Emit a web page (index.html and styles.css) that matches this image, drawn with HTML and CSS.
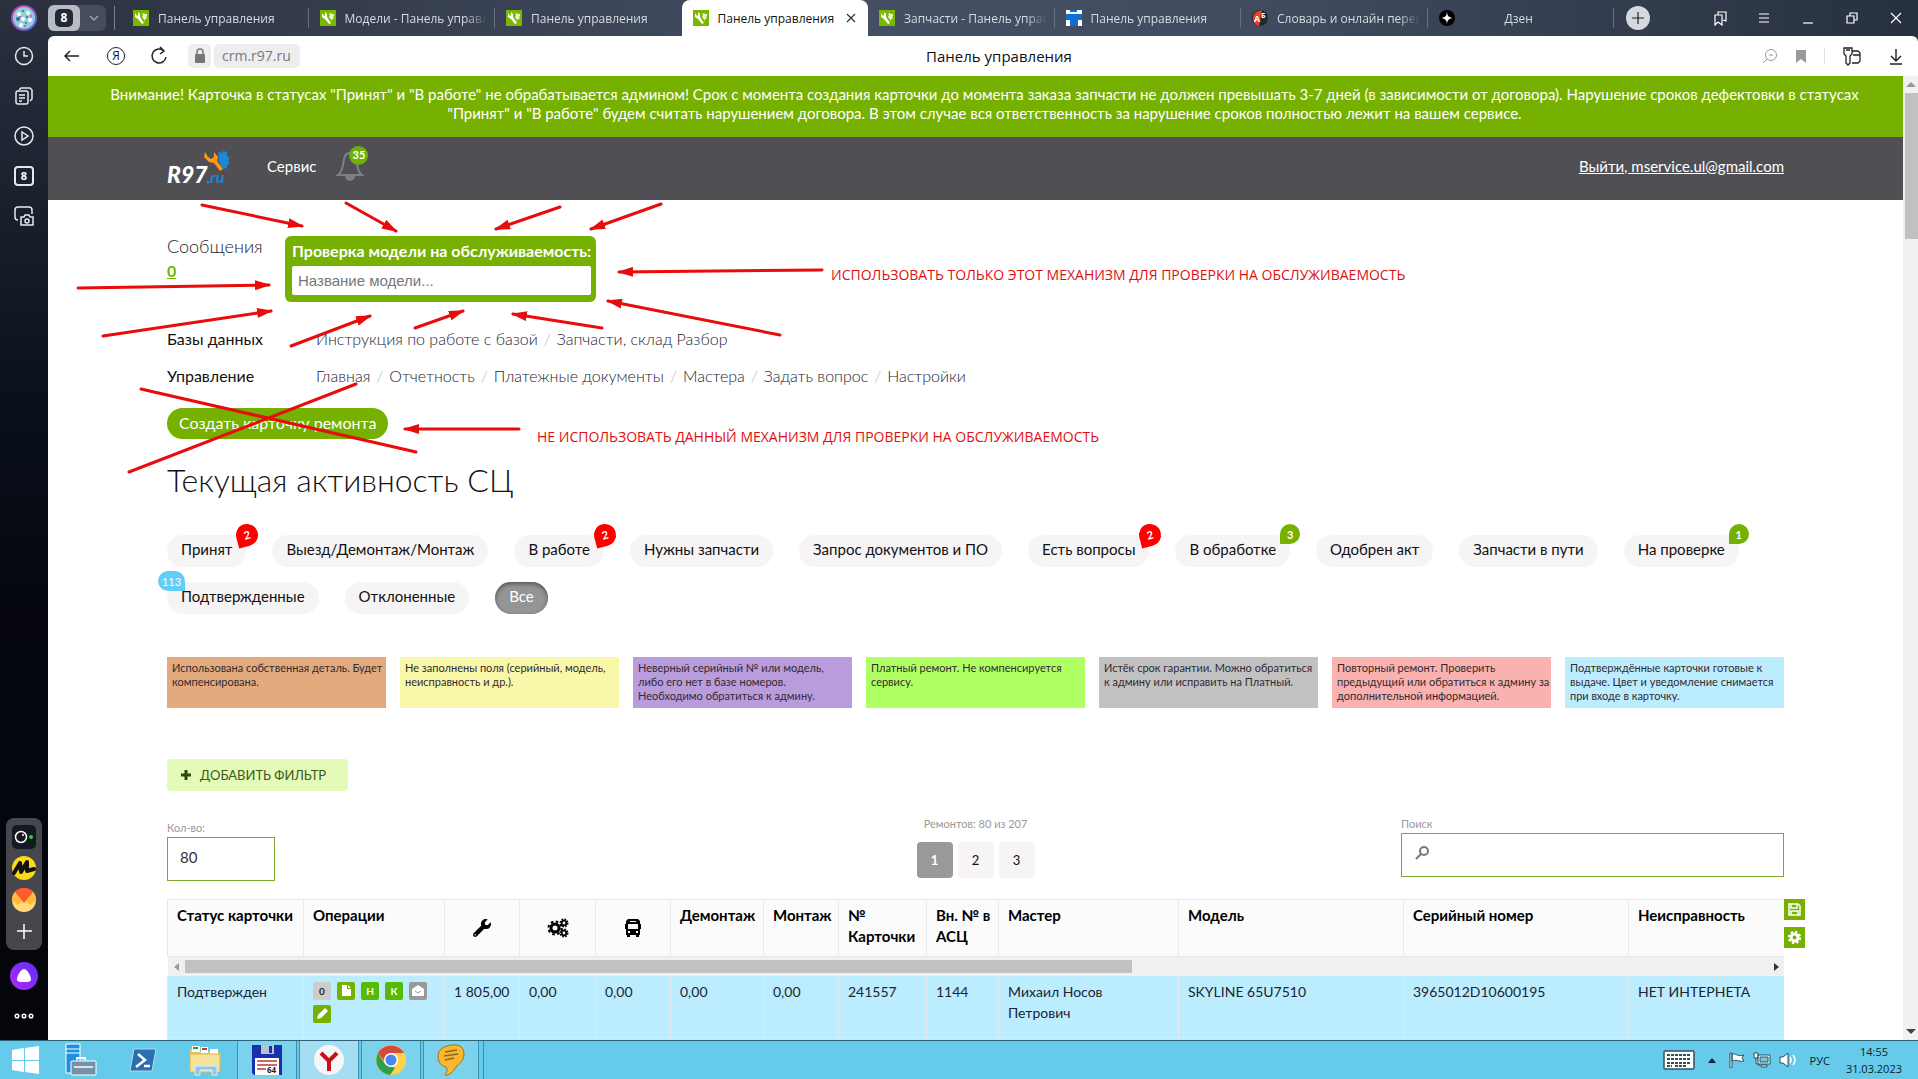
FILE: index.html
```
<!DOCTYPE html>
<html lang="ru">
<head>
<meta charset="utf-8">
<title>Панель управления</title>
<link rel="stylesheet" href="styles.css">
</head>
<body>
<svg class="defs" aria-hidden="true">
  <defs>
    <symbol id="wrench" viewBox="0 0 512 512"><path fill="currentColor" d="M507.73 109.1c-2.24-9.03-13.54-12.09-20.12-5.51l-74.36 74.36-67.88-11.31-11.31-67.88 74.36-74.36c6.62-6.62 3.43-17.9-5.66-20.16-47.38-11.74-99.55.91-136.58 37.93-39.64 39.64-50.55 97.1-34.05 147.2L18.74 402.76c-24.99 24.99-24.99 65.51 0 90.5 24.99 24.99 65.51 24.99 90.5 0l213.21-213.21c50.12 16.71 107.47 5.68 147.37-34.22 37.07-37.07 49.7-89.32 37.91-136.73zM64 472c-13.25 0-24-10.75-24-24 0-13.26 10.75-24 24-24s24 10.74 24 24c0 13.25-10.75 24-24 24z"/></symbol>
    <symbol id="fav" viewBox="0 0 16 16"><path fill="#7ab800" d="M0 0h16v16H0z"/><path fill="#fff" d="M2 3v4l3 2 4 5 2-1-4-6V4L5 2v3L4 6z"/><path fill="#e8f5c8" d="M9 3l1 1 1-1 1 1h2v2l-1 1 1 1-1 1h-1v2l-3-4 1-2-1-1z"/></symbol>
    <marker id="head" viewBox="0 0 16 10" refX="14" refY="5" markerWidth="16" markerHeight="10" markerUnits="userSpaceOnUse" orient="auto"><path d="M0 0l16 5-16 5z" fill="#e80c0c"/></marker>
  </defs>
</svg>
<div class="desktop">
  <div class="browser">
    <aside class="rail">
      <span class="avatar"><svg width="26" height="26" viewBox="0 0 26 26"><defs><linearGradient id="ring" x1="0" y1="0" x2="1" y2="1"><stop offset="0" stop-color="#e0409a"/><stop offset="1" stop-color="#5a5cf0"/></linearGradient></defs><circle cx="13" cy="13" r="12" fill="#8fd0d8" stroke="url(#ring)" stroke-width="2"/><g fill="#fff"><circle cx="8" cy="9" r="2"/><circle cx="17" cy="8" r="2"/><circle cx="12" cy="14" r="2"/><circle cx="19" cy="15" r="2"/><circle cx="10" cy="20" r="2"/></g><g fill="#3b62a8"><circle cx="12" cy="6" r="1"/><circle cx="7" cy="14" r="2"/><circle cx="16" cy="12" r="1"/><circle cx="15" cy="18" r="1"/></g><g fill="#d04a90"><circle cx="20" cy="11" r="1"/><circle cx="14" cy="21" r="1"/><circle cx="9" cy="12" r="1"/></g></svg></span>
      <nav class="rail-nav">
        <button aria-label="История"><svg width="20" height="20" viewBox="0 0 20 20"><circle cx="10" cy="10" r="8.5"/><path d="M10 5v5h4"/></svg></button>
        <button aria-label="Коллекции"><svg width="20" height="20" viewBox="0 0 20 20"><rect x="2" y="5" width="12" height="13" rx="2"/><path d="M5 4l2-2h9l2 2v9l-2 2M5 9h6M5 12h6M5 15h3"/></svg></button>
        <button aria-label="Видео"><svg width="20" height="20" viewBox="0 0 20 20"><circle cx="10" cy="10" r="9"/><path d="M8 6l6 4-6 4z"/></svg></button>
        <button aria-label="Вкладки" class="rail-count">8</button>
        <button aria-label="Снимок"><svg width="20" height="20" viewBox="0 0 20 20"><path d="M4 14c-2 0-3-1-3-3V4c0-2 1-3 3-3h11c2 0 3 1 3 3v4"/><path d="M7 11h3l1-2h4l1 2h3v8H7z"/><circle cx="13" cy="15" r="2"/></svg></button>
      </nav>
      <div class="rail-apps">
        <svg width="24" height="24" viewBox="0 0 24 24"><rect width="24" height="24" rx="5" fill="#131a22"/><circle cx="9" cy="12" r="5.5" fill="none" stroke="#fff" stroke-width="1.5"/><circle cx="11" cy="10" r="1" fill="#fff"/><circle cx="19" cy="12" r="2" fill="#19e02c"/></svg>
        <svg width="24" height="24" viewBox="0 0 24 24"><circle cx="12" cy="12" r="12" fill="#fdd91c"/><path d="M2 17L8 7l1 9 6-10v9l7-2" fill="none" stroke="#111" stroke-width="4" stroke-linejoin="round" stroke-linecap="round"/></svg>
        <svg width="24" height="24" viewBox="0 0 24 24"><circle cx="12" cy="12" r="12" fill="#ffd97a"/><path d="M0 12a12 12 0 0 1 3-8l9 10 9-10a12 12 0 0 1 3 8l-5 5-7-5-7 5z" fill="#ffbb33"/><path d="M3 4a12 12 0 0 1 18 0l-9 11z" fill="#ff5c2b"/></svg>
        <svg width="24" height="24" viewBox="0 0 24 24" stroke="#fff" stroke-width="1.5"><path d="M12 5v15M5 12h15"/></svg>
      </div>
      <svg class="alice" width="28" height="28" viewBox="0 0 28 28"><defs><linearGradient id="al" x1="0" y1="1" x2="1" y2="0"><stop offset="0" stop-color="#b428ee"/><stop offset="1" stop-color="#5a30ff"/></linearGradient></defs><circle cx="14" cy="14" r="14" fill="url(#al)"/><path d="M14 7c3 0 7 7 7 10s-3 3-7 3-7 0-7-3 4-10 7-10z" fill="#fff"/></svg>
      <svg class="more" width="20" height="6" viewBox="0 0 20 6" fill="none" stroke="#fff" stroke-width="1.5"><circle cx="3" cy="3" r="1.8"/><circle cx="10" cy="3" r="1.8"/><circle cx="17" cy="3" r="1.8"/></svg>
    </aside>
    <div class="window">
      <div class="tabstrip">
        <div class="group"><span class="group-count"><b>8</b></span><svg width="26" height="26" viewBox="0 0 26 26" fill="none" stroke="#9aa2b0" stroke-width="1.5"><path d="M10 11l4 4 4-4"/></svg></div>
        <div class="tabs">
          <div class="tab"><svg width="16" height="16"><use href="#fav"/></svg><span>Панель управления</span></div>
          <div class="tab"><svg width="16" height="16"><use href="#fav"/></svg><span>Модели - Панель управления</span></div>
          <div class="tab no-line"><svg width="16" height="16"><use href="#fav"/></svg><span>Панель управления</span></div>
          <div class="tab active"><svg width="16" height="16"><use href="#fav"/></svg><span>Панель управления</span><svg class="close" width="10" height="10" viewBox="0 0 10 10" stroke="#333" stroke-width="1.2"><path d="M1 1l8 8M9 1l-8 8"/></svg></div>
          <div class="tab"><svg width="16" height="16"><use href="#fav"/></svg><span>Запчасти - Панель управления</span></div>
          <div class="tab"><svg width="16" height="16" viewBox="0 0 16 16"><path fill="#fff" d="M0 0h16v16H0z"/><path fill="#0f6fd6" d="M0 4h16v6h-4v6H4v-6H0zM4 0h7v2H4z"/></svg><span>Панель управления</span></div>
          <div class="tab"><svg width="16" height="16" viewBox="0 0 16 16"><circle cx="8" cy="8" r="8" fill="#26262c"/><path fill="#e8402a" d="M10 0L7 16a8 8 0 0 1-3-14z"/><text x="2" y="12" font-size="9" font-weight="700" fill="#fff">A</text><text x="9" y="8" font-size="7" font-weight="700" fill="#fff">Б</text></svg><span>Словарь и онлайн переводчик</span></div>
          <div class="tab zen"><svg width="16" height="16" viewBox="0 0 16 16"><circle cx="8" cy="8" r="8" fill="#000"/><path fill="#fff" d="M8 1c0 5 2 7 7 7-5 0-7 2-7 7 0-5-2-7-7-7 5 0 7-2 7-7z"/></svg><span>Дзен</span></div>
        </div>
        <button class="plus" aria-label="Новая вкладка"><svg width="24" height="24" viewBox="0 0 24 24"><circle cx="12" cy="12" r="12" fill="#d5d8de"/><path d="M12 6v12M6 12h12" stroke="#222" stroke-width="1.2"/></svg></button>
        <div class="wincontrols">
          <svg width="16" height="16" viewBox="0 0 16 16"><path d="M3 5h7v10l-4-3-3 3zM6 5V2h8v9l-3-1"/></svg>
          <svg width="16" height="16" viewBox="0 0 16 16"><path d="M3 4h10M3 8h10M3 12h10"/></svg>
          <svg width="16" height="16" viewBox="0 0 16 16"><path d="M3 13h10"/></svg>
          <svg width="16" height="16" viewBox="0 0 16 16"><path d="M3 6h7v7H3zM6 6V3h7v7h-3"/></svg>
          <svg width="16" height="16" viewBox="0 0 16 16"><path d="M3 3l10 10M13 3L3 13"/></svg>
        </div>
      </div>
      <div class="toolbar">
        <div class="tools-left">
          <button aria-label="Назад"><svg width="20" height="20" viewBox="0 0 20 20"><path d="M17 10H3M8 5l-5 5 5 5"/></svg></button>
          <button aria-label="Яндекс" class="ya">Я</button>
          <button aria-label="Обновить"><svg width="20" height="20" viewBox="0 0 20 20"><path d="M15 5a7 7 0 1 0 2 6M11 1l4 4-4 3"/></svg></button>
          <div class="address"><span class="lock"><svg width="12" height="16" viewBox="0 0 12 16"><rect x="1" y="6" width="10" height="9" rx="1" fill="#777"/><path d="M3 7V4a3 3 0 0 1 6 0v3" fill="none" stroke="#777" stroke-width="1.5"/></svg></span><span class="url">crm.r97.ru</span></div>
        </div>
        <span class="page-title">Панель управления</span>
        <div class="tools-right">
          <svg width="16" height="16" viewBox="0 0 16 16" stroke="#999"><circle cx="9" cy="7" r="5.5"/><path d="M7 7h4M5 11l-4 4"/></svg>
          <svg width="12" height="16" viewBox="0 0 12 16"><path d="M1 2h10v13l-5-4-5 4z" fill="#999"/></svg>
          <i></i>
          <svg width="20" height="20" viewBox="0 0 20 20" stroke="#222" stroke-width="1.3"><path d="M2 2h8v6L8 10v7l-2 2-2-2v-7L2 8zM4 4h4M10 5h6l2 2v8l-2 2h-6M11 9h7"/></svg>
          <svg width="16" height="18" viewBox="0 0 16 18" stroke="#222" stroke-width="1.4"><path d="M8 2v11M3 9l5 5 5-5M2 17h12"/></svg>
        </div>
      </div>
      <div class="view">
        <div class="page">
          <p class="banner">Внимание! Карточка в статусах "Принят" и "В работе" не обрабатывается админом! Срок с момента создания карточки до момента заказа запчасти не должен превышать 3-7 дней (в зависимости от договора). Нарушение сроков дефектовки в статусах "Принят" и "В работе" будем считать нарушением договора. В этом случае вся ответственность за нарушение сроков полностью лежит на вашем сервисе.</p>
          <header class="site-head">
            <a href="#" class="logo" aria-label="R97.ru"><svg width="64" height="36" viewBox="0 0 64 36"><g transform="translate(37 1)"><path fill="#ff9a0a" d="M1 3l-1 5 5 5 5 1 6 8 3-2-6-8 1-4-4-5v5l-3 2-3-2z"/><path fill="#1c86d8" d="M14 3l4 1 1-2 4 1v4l3 2-2 3 2 3-3 1v3l-4 1-5-9 1-2z"/></g><text x="0" y="35" font-size="23" font-weight="900" font-style="italic" fill="#fff">R97</text><text x="43" y="35" font-size="16" font-weight="700" font-style="italic" fill="#1c86d8">ru</text><circle cx="41" cy="34" r="1.5" fill="#1c86d8"/></svg></a>
            <a href="#" class="service">Сервис</a>
            <a href="#" class="bell" aria-label="Уведомления"><svg width="28" height="32" viewBox="0 0 28 32" fill="none" stroke="#7c8184" stroke-width="2"><path d="M14 3c-6 0-6 6-7 12-1 5-2 8-5 10h24c-3-2-4-5-5-10-1-6-1-12-7-12z"/><path d="M10 26a4 4 0 0 0 8 0z" fill="#7c8184"/></svg><b>35</b></a>
            <a href="#" class="logout">Выйти, mservice.ul@gmail.com</a>
          </header>
          <main>
            <section class="top">
              <div class="messages"><span>Сообщения</span><a href="#">0</a></div>
              <form class="check"><label for="model">Проверка модели на обслуживаемость:</label><input id="model" type="text" placeholder="Название модели..."></form>
            </section>
            <nav class="links"><span>Базы данных</span><div><a href="#">Инструкция по работе с базой</a><a href="#">Запчасти, склад Разбор</a></div></nav>
            <nav class="links"><span>Управление</span><div><a href="#">Главная</a><a href="#">Отчетность</a><a href="#">Платежные документы</a><a href="#">Мастера</a><a href="#">Задать вопрос</a><a href="#">Настройки</a></div></nav>
            <button class="create">Создать карточку ремонта</button>
            <h1>Текущая активность СЦ</h1>
            <nav class="pills">
              <a href="#">Принят<b class="red">2</b></a>
              <a href="#">Выезд/Демонтаж/Монтаж</a>
              <a href="#">В работе<b class="red">2</b></a>
              <a href="#">Нужны запчасти</a>
              <a href="#">Запрос документов и ПО</a>
              <a href="#">Есть вопросы<b class="red">2</b></a>
              <a href="#">В обработке<b>3</b></a>
              <a href="#">Одобрен акт</a>
              <a href="#">Запчасти в пути</a>
              <a href="#">На проверке<b>1</b></a>
              <a href="#">Подтвержденные<b class="blue">113</b></a>
              <a href="#">Отклоненные</a>
              <a href="#" class="on">Все</a>
            </nav>
            <ul class="legend">
              <li class="c1">Использована собственная деталь. Будет компенсирована.</li>
              <li class="c2">Не заполнены поля (серийный, модель, неисправность и др.).</li>
              <li class="c3">Неверный серийный № или модель, либо его нет в базе номеров. Необходимо обратиться к админу.</li>
              <li class="c4">Платный ремонт. Не компенсируется сервису.</li>
              <li class="c5">Истёк срок гарантии. Можно обратиться к админу или исправить на Платный.</li>
              <li class="c6">Повторный ремонт. Проверить предыдущий или обратиться к админу за дополнительной информацией.</li>
              <li class="c7">Подтверждённые карточки готовые к выдаче. Цвет и уведомление снимается при входе в карточку.</li>
            </ul>
            <button class="add-filter"><svg width="10" height="10" viewBox="0 0 10 10"><path d="M5 0v10M0 5h10" stroke="#2c4a00" stroke-width="3"/></svg>ДОБАВИТЬ ФИЛЬТР</button>
            <section class="controls">
              <div class="count"><label for="count">Кол-во:</label><input id="count" type="text" value="80"></div>
              <div class="pager"><span>Ремонтов: 80 из 207</span><div><button class="on">1</button><button>2</button><button>3</button></div></div>
              <div class="search"><label for="search">Поиск</label><div class="search-box"><svg width="16" height="16" viewBox="0 0 16 16" fill="none" stroke="#777" stroke-width="2"><circle cx="10" cy="6" r="4"/><path d="M7 9l-5 5"/></svg><input id="search" type="text"></div></div>
            </section>
            <div class="table-wrap">
              <table>
                <colgroup><col class="w136"><col class="w141"><col class="w75"><col class="w76"><col class="w75"><col class="w93"><col class="w75"><col class="w88"><col class="w72"><col class="w180"><col class="w225"><col class="w225"><col></colgroup>
                <thead>
                  <tr>
                    <th>Статус карточки</th><th>Операции</th>
                    <th class="ic"><svg width="18" height="18"><use href="#wrench"/></svg></th>
                    <th class="ic"><svg width="22" height="20" viewBox="0 0 22 20" fill="none" stroke="#000"><circle cx="8" cy="10" r="4" stroke-width="3"/><circle cx="8" cy="10" r="6.5" stroke-width="2" stroke-dasharray="2.6 2.5"/><circle cx="17" cy="5" r="2.3" stroke-width="1.8"/><circle cx="17" cy="5" r="3.8" stroke-width="1.4" stroke-dasharray="1.7 1.28"/><circle cx="17" cy="15" r="2.3" stroke-width="1.8"/><circle cx="17" cy="15" r="3.8" stroke-width="1.4" stroke-dasharray="1.7 1.28"/></svg></th>
                    <th class="ic"><svg width="18" height="20" viewBox="0 0 18 20"><path fill="#000" fill-rule="evenodd" d="M4 1h10l2 2v3h1v5h-1v6h-1v2h-3v-2H6v2H3v-2H2v-6H1V6h1V3zM6 3v1h6V3zM4 6v5h10V6zM4 13v2h2v-2zM12 13v2h2v-2z"/></svg></th>
                    <th>Демонтаж</th><th>Монтаж</th><th>№ Карточки</th><th>Вн. № в АСЦ</th><th>Мастер</th><th>Модель</th><th>Серийный номер</th><th>Неисправность</th>
                  </tr>
                  <tr class="scroll-row"><td colspan="13"><div class="hscroll"><i class="left"></i><span></span><i class="right"></i></div></td></tr>
                </thead>
                <tbody>
                  <tr>
                    <td>Подтвержден</td>
                    <td><div class="ops"><button class="zero">0</button><button class="doc" aria-label="Документ"><svg width="18" height="18" viewBox="0 0 18 18"><path d="M5 3h5v4h4v7H5z" fill="#fff"/><path d="M11 3l3 3h-3z" fill="#fff"/></svg></button><button>Н</button><button>К</button><button class="mail" aria-label="Письмо"><svg width="18" height="18" viewBox="0 0 18 18"><path d="M3 7l6-4 6 4v7H3z" fill="#fff"/><path d="M6 9l3 2 3-2" fill="none" stroke="#999"/></svg></button><button class="doc" aria-label="Изменить"><svg width="18" height="18" viewBox="0 0 18 18"><path d="M4 14l1-4 7-7 3 3-7 7z" fill="#fff"/></svg></button></div></td>
                    <td class="num">1 805,00</td><td>0,00</td><td>0,00</td><td>0,00</td><td>0,00</td><td>241557</td><td>1144</td><td>Михаил Носов<br>Петрович</td><td>SKYLINE 65U7510</td><td>3965012D10600195</td><td>НЕТ ИНТЕРНЕТА</td>
                  </tr>
                  <tr><td></td><td></td><td></td><td></td><td></td><td></td><td></td><td></td><td></td><td></td><td></td><td></td><td></td></tr>
                </tbody>
              </table>
              <div class="side">
                <button aria-label="Сохранить"><svg width="15" height="15" viewBox="0 0 15 15" fill="none" stroke="#fff" stroke-width="1.5"><path d="M2 2h9l2 2v9H2zM4 2v4h6V2M4 13V9h7v4"/></svg></button>
                <button aria-label="Настройки"><svg width="15" height="15" viewBox="0 0 15 15" fill="none" stroke="#fff"><circle cx="7.5" cy="7.5" r="3.5" stroke-width="3"/><circle cx="7.5" cy="7.5" r="5.5" stroke-width="2.4" stroke-dasharray="2.3 2"/></svg></button>
              </div>
            </div>
          </main>
          <div class="notes">
            <svg width="1200" height="420" viewBox="48 76 1200 420" fill="none" stroke="#e80c0c" stroke-width="3" stroke-linecap="round">
              <g class="arrows">
                <path d="M202 205L302 226"/><path d="M346 203L396 231"/><path d="M560 207L496 229"/><path d="M661 204L591 229"/><path d="M78 288L269 285"/><path d="M103 336L271 311"/><path d="M291 346L370 316"/><path d="M415 328L463 311"/><path d="M602 328L513 314"/><path d="M822 270L619 272"/><path d="M780 335L608 301"/><path d="M519 429L405 429"/>
              </g>
              <path d="M141 389L416 452M356 384L129 472"/>
            </svg>
            <span class="note-use">ИСПОЛЬЗОВАТЬ ТОЛЬКО ЭТОТ МЕХАНИЗМ ДЛЯ ПРОВЕРКИ НА ОБСЛУЖИВАЕМОСТЬ</span>
            <span class="note-avoid">НЕ ИСПОЛЬЗОВАТЬ ДАННЫЙ МЕХАНИЗМ ДЛЯ ПРОВЕРКИ НА ОБСЛУЖИВАЕМОСТЬ</span>
          </div>
        </div>
        <div class="vscroll"><i class="up"></i><span></span><i class="down"></i></div>
      </div>
    </div>
  </div>
  <footer class="taskbar">
    <button class="app" aria-label="Пуск"><svg width="30" height="28" viewBox="0 0 30 28" fill="#fff"><path d="M1 4l12-2v12H1zM14 2l14-2v14H14zM1 15h12v11L1 24zM14 15h14v13l-14-2z"/></svg></button>
    <button class="app" aria-label="Диспетчер серверов"><svg width="32" height="34" viewBox="0 0 32 34" stroke="#fff"><path d="M1 1h14v29H1z" fill="#1f8fe0"/><path d="M1 6h14M1 10h14"/><path d="M12 17v-2h8v2" fill="none" stroke-width="2"/><rect x="6" y="18" width="25" height="14" rx="1" fill="#7592a8"/><path d="M9 24h19" stroke-width="1.5"/></svg></button>
    <button class="app" aria-label="PowerShell"><svg width="28" height="24" viewBox="0 0 28 24"><path d="M5 1h22l-4 22H1z" fill="#2a6fb0" stroke="#b8d8ee"/><path d="M9 6l7 6-9 7M15 18h6" fill="none" stroke="#fff" stroke-width="2.5"/></svg></button>
    <button class="app" aria-label="Проводник"><svg width="34" height="32" viewBox="0 0 34 32"><path d="M2 5h9l2 3h18v20H2z" fill="#e8c860"/><path d="M4 2h8v6H4zM13 3h7v6h-7zM22 5h8v6h-8z" fill="#fff"/><path d="M5 3h5v2H5z" fill="#2a9a3a"/><path d="M14 4h5v2h-5z" fill="#c83a2a"/><path d="M2 10h30v18H2z" fill="#f6e39a" stroke="#d9b850"/><path d="M7 31v-9h22v9h-5v-5H12v5z" fill="#8cc8ee" stroke="#d8f0fc"/></svg></button>
    <button class="app run" aria-label="Total Commander"><svg width="32" height="32" viewBox="0 0 32 32"><path d="M1 1h30v30H3l-2-2z" fill="#1a2fae"/><path d="M10 1h13v9H10z" fill="#b9c3cc"/><path d="M18 2h3v7h-3z" fill="#1a2fae"/><path d="M4 14h24v17H4z" fill="#fff"/><path d="M6 17h20M6 21h20M6 25h9" stroke="#b83a3a" stroke-width="1.3"/><text x="16" y="29" font-size="8" font-weight="700" fill="#222">64</text></svg></button>
    <button class="app run current" aria-label="Яндекс Браузер"><svg width="30" height="30" viewBox="0 0 30 30"><circle cx="15" cy="15" r="15" fill="#f5f6f8"/><path d="M7 8l8 8 8-8M15 16v10" fill="none" stroke="#c8101a" stroke-width="4"/></svg></button>
    <button class="app run" aria-label="Chrome"><svg width="30" height="30" viewBox="0 0 30 30"><circle cx="15" cy="15" r="15" fill="#ffd24a"/><path d="M2 8a15 15 0 0 1 26 0H15l-6 9z" fill="#d64a3c"/><path d="M2 8l7 11 10 4-5 7A15 15 0 0 1 2 8z" fill="#2f9e4f"/><circle cx="15" cy="15" r="7" fill="#fff"/><circle cx="15" cy="15" r="5.5" fill="#4a86f0"/></svg></button>
    <button class="app run chat" aria-label="Чат"><svg width="28" height="32" viewBox="0 0 28 32"><path d="M15 1c8-1 12 3 12 9 0 7-5 9-8 13-2 3-4 6-8 8-2 0-3 0-3-1 2-2 3-5 1-7C4 22 1 18 1 12 1 6 6 2 15 1z" fill="#f8b830" stroke="#a86a10"/><path d="M8 8l12-2M7 12l14-2M8 16l9-2" stroke="#8a6a20" stroke-width="1.5"/></svg></button>
    <i class="divider"></i>
    <div class="tray">
      <svg width="32" height="20" viewBox="0 0 32 20"><rect x="1" y="1" width="30" height="18" rx="1" fill="#fff" stroke="#33505e" stroke-width="1.5"/><path d="M4 5h24M4 9h24M4 13h24M4 16h5M12 16h12" stroke="#33505e" stroke-width="2" stroke-dasharray="3 1"/></svg>
      <svg width="8" height="5" viewBox="0 0 8 5"><path d="M0 5l4-5 4 5z" fill="#123"/></svg>
      <svg width="16" height="16" viewBox="0 0 16 16" fill="#fff" stroke="#23505e"><path d="M1 1h2v15H1zM3 2c4-1 5 3 12 1l-2 3 2 3c-6 1-8-2-12 0z"/></svg>
      <svg width="18" height="16" viewBox="0 0 18 16" fill="#fff" stroke="#23505e"><path d="M5 3h12v9H5zM8 13h6v2H8zM1 1h4v5H1zM3 6v6h3v2"/><path d="M7 5h8v5H7z" fill="#66cbea"/></svg>
      <svg width="18" height="16" viewBox="0 0 18 16" fill="#fff" stroke="#23505e"><path d="M1 5h3l5-4v14l-5-4H1z"/><path d="M11 5q2 3 0 6M14 3q4 5 0 10" fill="none" stroke="#fff" stroke-width="1.5"/></svg>
      <span>РУС</span>
      <time>14:55<br>31.03.2023</time>
    </div>
  </footer>
</div>
</body>
</html>
```
FILE: styles.css
```
*{box-sizing:border-box}
body{margin:0;font-family:"Lato","Open Sans",sans-serif;font-size:15px;color:#1d2430;overflow:hidden}
button,input{font:inherit;color:inherit;margin:0;border:0;padding:0;background:none}
a{color:inherit;text-decoration:none}
svg{display:block;flex:none}
h1,p,ul{margin:0;padding:0}
.defs{position:absolute;width:0;height:0}

.desktop{height:100vh;display:flex;flex-direction:column;font-family:"Open Sans",sans-serif}
.browser{flex:1;min-height:0;display:flex;background:linear-gradient(90deg,#2b313e 0,#444f64 45%,#414c60 65%,#27303f 100%)}
.window{flex:1;min-width:0;display:flex;flex-direction:column}

/* side rail */
.rail{width:48px;display:flex;flex-direction:column;align-items:center;background:linear-gradient(#2b313e 0,#1c2431 16%,#0a111c 38%,#05060e 60%,#04060c 100%);padding:5px 0 21px}
.rail-nav{display:flex;flex-direction:column;gap:20px;margin-top:15px}
.rail-nav svg{fill:none;stroke:#e6e9ee;stroke-width:1.5}
.rail-count{width:20px;height:20px;border:2px solid #e6e9ee;border-radius:4px;color:#fff;font-size:11px;font-weight:700;line-height:16px}
.rail-apps{width:36px;height:132px;margin-top:auto;border-radius:8px;background:#45474d;display:flex;flex-direction:column;align-items:center;justify-content:space-evenly}
.alice{margin:12px 0 23px}

/* tab strip */
.tabstrip{height:36px;display:flex;align-items:center;color:#d7dbe2;font-size:12px}
.group{display:flex;width:58px;height:26px;border-radius:6px;background:#464d5b}
.group-count{width:32px;height:26px;border-radius:6px;background:#b9bcc3;display:flex;align-items:center;justify-content:center}
.group-count b{width:18px;height:18px;border-radius:5px;background:#222a36;color:#fff;line-height:18px;text-align:center}
.tabs{flex:1;min-width:0;align-self:stretch;display:flex;margin-left:16px}
.tabs::before{content:"";width:1px;height:24px;margin:6px 7px 0 -8px;background:#7b8393}
.tab{flex:1;min-width:0;display:flex;align-items:center;gap:9px;padding:0 8px 0 11px;position:relative}
.tab span{flex:1;overflow:hidden;white-space:nowrap;padding-right:4px;-webkit-mask-image:linear-gradient(90deg,#000 85%,transparent);mask-image:linear-gradient(90deg,#000 85%,transparent)}
.tab::after{content:"";position:absolute;right:0;top:8px;width:1px;height:20px;background:#667083}
.tab.no-line::after,.tab.active::after{display:none}
.tab.active{background:#fff;color:#111;border-radius:8px 8px 0 0}
.tab.active span{-webkit-mask-image:none;mask-image:none}
.tab.active .close{margin-right:4px}
.zen span{text-align:center;padding-right:32px}
.plus{margin:0 62px 0 12px}
.wincontrols{display:flex;gap:28px;padding-right:14px}
.wincontrols svg{fill:none;stroke:#fff;stroke-width:1.2}

/* toolbar */
.toolbar{height:40px;display:grid;grid-template-columns:1fr auto 1fr;align-items:center;background:#fff;border-radius:6px 6px 0 0;padding-left:14px}
.tools-left{display:flex;align-items:center;gap:24px}
.tools-left svg{fill:none;stroke:#222;stroke-width:1.5}
.tools-left .lock svg{stroke:none}
.ya{width:18px;height:18px;border:1px solid #222;border-radius:50%;font-size:12px;line-height:16px;color:#111;margin-left:1px}
.address{display:flex;gap:3px;color:#777;font-size:14px;line-height:24px;margin-left:-5px}
.lock,.url{height:24px;border-radius:5px;background:#ededed}
.lock{width:23px;display:flex;align-items:center;justify-content:center}
.url{padding:0 9px 0 8px}
.page-title{font-size:15px;color:#111;margin-left:18px}
.tools-right{display:flex;align-items:center;justify-content:flex-end;gap:17px;padding-right:14px;fill:none}
.tools-right svg{fill:none}
.tools-right i{width:1px;height:16px;background:#ddd}
.tools-right svg:last-child{margin-left:9px}

/* viewport */
.view{flex:1;min-height:0;display:flex;background:#fff}
.page{flex:1;min-width:0;position:relative;overflow:hidden;font-family:"Lato","Open Sans",sans-serif}
.vscroll{width:15px;background:#f1f1f1;display:flex;flex-direction:column;align-items:center;padding:6px 0}
.vscroll span{width:13px;height:146px;margin:6px 0 auto 2px;background:#c1c1c1}
.up,.down{border:5px solid transparent}
.up{border-top:0;border-bottom-color:#999}
.down{border-bottom:0;border-top-color:#444}

.banner{background:#76b000;color:#fff;text-align:center;line-height:19px;padding:9px 32px 14px 50px}
.site-head{height:63px;background:#504f54;color:#fff;display:flex;align-items:center;padding:0 119px 6px}
.service{margin-left:36px}
.bell{position:relative;margin-left:20px}
.bell b{position:absolute;left:13px;top:-4px;width:19px;height:19px;border-radius:50%;background:#6db00a;font-size:11px;line-height:18px;text-align:center}
.logout{margin-left:auto;text-decoration:underline}

main{padding:36px 119px 0}
.top{display:flex;height:66px}
.messages{width:118px;display:flex;flex-direction:column;align-items:flex-start;font-size:18px;line-height:20px;font-weight:300;gap:5px}
.messages a{font-size:16px;font-weight:700;color:#76b000;text-decoration:underline}
.check{background:#76b000;border-radius:6px;padding:3px 5px 7px 7px;display:flex;flex-direction:column;color:#fff;font-size:16px;font-weight:700;line-height:24px}
.check input{width:100%;height:29px;margin-top:3px;padding:0 6px;background:#fff;border-radius:2px;color:#333;font:15px "Liberation Sans",sans-serif}
.check input::placeholder{color:#777}
.links{display:flex;height:24px;margin-top:13px;line-height:24px;font-size:16px}
.top+.links{margin-top:25px}
.links>span{width:149px;color:#111}
.links div{display:flex;font-weight:300}
.links a+a::before{content:"/";margin:0 6px;color:#bbb}
.create{display:block;height:31px;margin-top:20px;padding:0 12px 3px;border-radius:16px;background:#76b000;color:#fff;font-size:16px}
h1{margin-top:21px;font-size:32px;line-height:40px;font-weight:300;color:#111}
.pills{display:flex;flex-wrap:wrap;gap:15px 26px;margin-top:35px}
.pills a{position:relative;height:32px;line-height:28px;padding:0 14px;border-radius:16px;background:#f6f4f5;color:#111}
.pills b{position:absolute;right:-10px;top:-11px;width:20px;height:20px;border-radius:50% 50% 50% 0;background:#76b000;color:#fff;font-size:11px;line-height:21px;text-align:center}
.pills .red{background:#f00;right:-12px;width:22px;height:22px;transform:rotate(-15deg)}
.pills .blue{background:#64cdf5;left:-9px;width:27px;border-radius:10px 10px 0 10px;font-weight:400}
.pills .on{background:#959595;color:#fff;box-shadow:inset 0 2px 4px #555}
.legend{display:grid;grid-template-columns:repeat(7,1fr);gap:14px;list-style:none;margin-top:43px;font-size:11px;line-height:14px;color:#332a30}
.legend li{height:51px;padding:4px 0 4px 5px}
.c1{background:#e3ab7d}.c2{background:#f8f8a8}.c3{background:#b99cdb}.c4{background:#b0ff63}.c5{background:#c1c1c1}.c6{background:#f9b2af}.c7{background:#bcedff}
.add-filter{display:flex;align-items:center;gap:9px;height:32px;margin-top:51px;padding:0 22px 0 14px;border-radius:4px;background:#e4fab8;color:#3d5a1a;font-size:13px}
.controls{display:grid;grid-template-columns:383px 1fr 383px;margin-top:24px;font-size:11px;line-height:18px;color:#999}
.count{padding-top:4px}
.controls label{display:block}
.controls input{color:#333;font-size:15px}
.count input{width:108px;height:44px;padding:0 12px 4px;border:1px solid #7da62a}
.pager{text-align:center}
.pager div{display:flex;justify-content:center;gap:5px;margin-top:9px}
.pager button{width:36px;height:36px;border-radius:4px;background:#f6f4f5;color:#111;font-size:13px}
.pager .on{background:#999;color:#fff;font-weight:700}
.search-box{height:44px;display:flex;align-items:center;gap:8px;padding:0 12px 4px;border:1px solid #7da62a}
.search-box input{flex:1;outline:0}

.table-wrap{position:relative;margin-top:18px}
table{width:100%;table-layout:fixed;border-collapse:collapse;font-size:14px;line-height:21px}
.w136{width:136px}.w141{width:141px}.w75{width:75px}.w76{width:76px}.w93{width:93px}.w88{width:88px}.w72{width:72px}.w180{width:180px}.w225{width:225px}
th{height:57px;padding:5px 2px 5px 9px;text-align:left;vertical-align:top;font-size:15px;font-weight:700;color:#000;background:#fbfbfb;border:1px solid #e9e9e9;border-width:1px 0 1px 1px}
.ic{padding:0;vertical-align:middle}
.ic svg{margin:0 auto}
tbody td{height:61px;padding:5px 9px;vertical-align:top;background:#bcedff;border:1px solid #dfe9ee;border-width:0 0 1px 1px}
tbody .num{padding-right:0}
.scroll-row td{padding:0}
.hscroll{height:19px;display:flex;align-items:center;background:#f0f0f0;padding:0 5px 0 6px}
.hscroll span{width:59%;height:13px;margin:0 auto 0 6px;background:#c1c1c1}
.left,.right{border:4px solid transparent}
.left{border-left:0;border-right:5px solid #999}
.right{border-right:0;border-left:5px solid #333}
.ops{display:flex;flex-wrap:wrap;gap:5px 6px;padding-top:1px}
.ops button{width:18px;height:18px;border-radius:2px;background:#55bb05;color:#fff;font-size:10px;font-weight:700;line-height:18px}
.ops .zero{background:#ccc;color:#222}
.ops .doc{background:#76b000}
.ops .mail{background:#999}
.side{position:absolute;left:100%;top:0;display:flex;flex-direction:column;gap:7px}
.side button{width:21px;height:21px;background:#76b000;display:flex;align-items:center;justify-content:center}

/* annotations drawn over the page */
.notes{position:absolute;left:0;top:0;pointer-events:none;font:14px/20px "Open Sans",sans-serif;color:#e01010;white-space:nowrap}
.notes span{position:absolute}
.arrows path{marker-end:url(#head)}
.note-use{left:783px;top:189px}
.note-avoid{left:489px;top:351px}

/* taskbar */
.taskbar{height:39px;display:flex;background:#66cbea;border-top:1px solid #2c6377;font-size:11px;color:#0d1e26}
.app{width:60px;display:flex;align-items:center;justify-content:center;margin-right:2px}
.app:first-child{width:51px;margin-right:0}
.app:nth-child(2){margin-right:2px}
.app.run{background:#7ad2ec;border:1px solid #3a8fab;border-width:0 1px}
.app.current{background:#a5def2}
.app.chat{width:56px}
.divider{width:1px;background:#3a8fab;margin-left:2px}
.tray{margin-left:auto;display:flex;align-items:center;gap:13px;padding-right:16px}
.tray svg:nth-child(n+4){margin-left:-5px}
.tray time{text-align:center;line-height:17px;margin-left:3px}
```
